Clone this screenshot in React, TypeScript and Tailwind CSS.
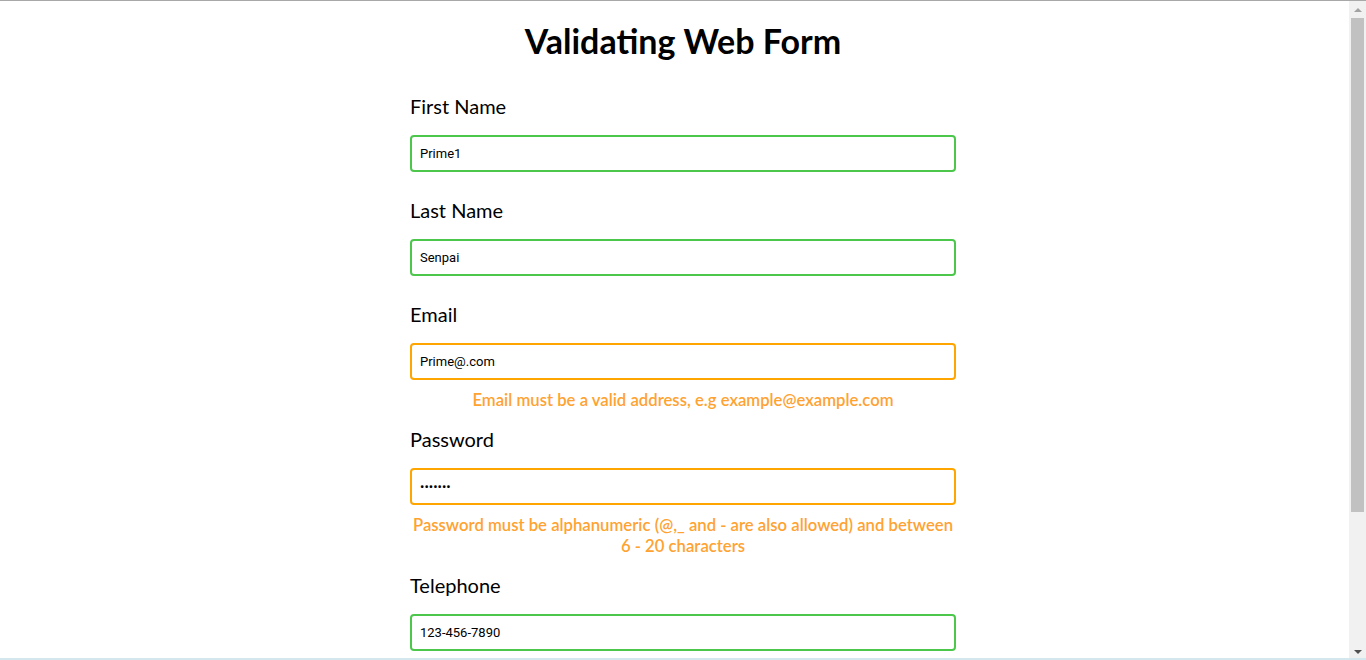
import React, { useState } from "react";

type Field = {
  id: string;
  label: string;
  type: string;
  value: string;
  valid: boolean;
  error?: string;
};

const fields: Field[] = [
  { id: "first", label: "First Name", type: "text", value: "Prime1", valid: true },
  { id: "last", label: "Last Name", type: "text", value: "Senpai", valid: true },
  {
    id: "email",
    label: "Email",
    type: "text",
    value: "Prime@.com",
    valid: false,
    error: "Email must be a valid address, e.g example@example.com",
  },
  {
    id: "password",
    label: "Password",
    type: "password",
    value: "1234567",
    valid: false,
    error:
      "Password must be alphanumeric (@,_ and - are also allowed) and between 6 - 20 characters",
  },
  { id: "tel", label: "Telephone", type: "text", value: "123-456-7890", valid: true },
];

function FormField({ field }: { field: Field }) {
  const [value, setValue] = useState(field.value);
  return (
    <div className="flex flex-col">
      <label
        htmlFor={field.id}
        className="text-[20px] leading-[28px] text-black mt-[1px] mb-[15px]"
      >
        {field.label}
      </label>
      <input
        id={field.id}
        type={field.type}
        value={value}
        onChange={(e) => setValue(e.target.value)}
        className={
          field.valid
            ? "h-[37px] w-full rounded-[4px] border-2 border-[#4cc74c] px-[8px] text-[13px] text-black outline-none font-['Roboto',sans-serif]"
            : "h-[37px] w-full rounded-[4px] border-2 border-[#ffa500] px-[8px] text-[13px] text-black outline-none font-['Roboto',sans-serif]"
        }
      />
      {field.error ? (
        <p className="mt-[10px] -mb-[10px] text-center text-[16.7px] leading-[21px] font-semibold text-[#ffa231]">
          {field.error}
        </p>
      ) : null}
    </div>
  );
}

export default function App() {
  return (
    <div className="relative h-[660px] overflow-hidden bg-white border-t border-[#a8a8a8] font-['Lato','Noto_Sans',sans-serif]">
      <h1 className="mt-[18px] text-center text-[34px] leading-[44px] font-bold text-black">
        Validating Web Form
      </h1>
      <form className="mx-auto mt-[28px] flex w-[546px] flex-col gap-[23px]">
        {fields.map((f) => (
          <FormField key={f.id} field={f} />
        ))}
      </form>

      {/* fake browser scrollbar */}
      <div className="absolute right-0 top-0 bottom-0 flex w-[17px] flex-col bg-[#f1f1f1]">
        <div className="flex h-[17px] items-center justify-center">
          <div className="h-0 w-0 border-x-[4px] border-b-[4px] border-x-transparent border-b-[#a3a3a3]" />
        </div>
        <div className="mx-[2px] h-[494px] bg-[#c1c1c1]" />
        <div className="flex-1" />
        <div className="flex h-[17px] items-center justify-center">
          <div className="h-0 w-0 border-x-[4px] border-t-[4px] border-x-transparent border-t-[#505050]" />
        </div>
      </div>
      <div className="absolute left-0 right-0 bottom-0 h-[2px] bg-[#d4e6ee]" />
    </div>
  );
}
